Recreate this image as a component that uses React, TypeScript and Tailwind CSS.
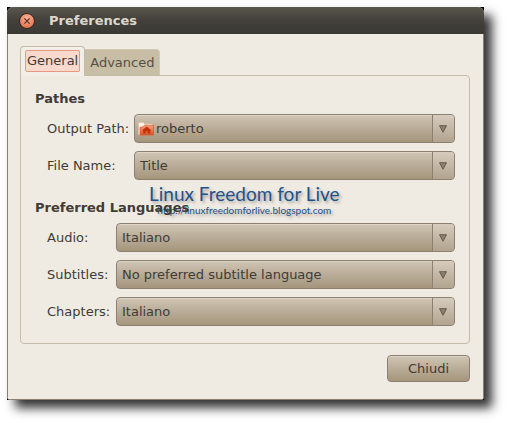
import type { ReactNode } from 'react';

type ComboProps = {
  id: string;
  label: string;
  value: string;
  options?: string[];
  labelWidth: string;
  icon?: ReactNode;
};

function HomeFolderIcon() {
  return (
    <svg viewBox="0 0 16 16" className="h-4 w-4" aria-hidden="true">
      <defs>
        <linearGradient id="folder" x1="0" y1="0" x2="0" y2="1">
          <stop offset="0" stopColor="#f3a37c" />
          <stop offset="1" stopColor="#dd5226" />
        </linearGradient>
      </defs>
      <path d="M0.5 13.5V1.5h5l1 1.5h8v10.5z" fill="#fbf1e6" stroke="#e3bda4" strokeWidth="0.6" />
      <path d="M2 14V6.2l3-.2 1.5-1.8H15.5V14z" fill="url(#folder)" stroke="#cf5a34" strokeWidth="0.7" />
      <path d="M8.7 5.5L4 9.5h1.2v3h2.5v-2.2h2v2.2h2.5v-3h1.300z" fill="#c0310c" />
    </svg>
  );
}

function ComboRow({ id, label, value, options = [], labelWidth, icon }: ComboProps) {
  return (
    <div className="flex items-center pl-3">
      <label htmlFor={id} className={`shrink-0 ${labelWidth}`}>
        {label}
      </label>
      <div className="relative min-w-0 flex-1">
        <select
          id={id}
          defaultValue={value}
          className={`block h-[29px] w-full appearance-none rounded-[4px] border border-[#8c8070] bg-linear-to-b from-[#d0c5b4] via-[#b9ac98] to-[#a5957c] pt-px pr-6 shadow-[inset_0_1px_0_#ddd4c6] ${icon ? 'pl-[21px]' : 'pl-[5px]'}`}
        >
          <option>{value}</option>
          {options.map((option) => (
            <option key={option}>{option}</option>
          ))}
        </select>
        {icon && <span className="pointer-events-none absolute top-[7px] left-1">{icon}</span>}
        <span className="pointer-events-none absolute inset-y-px right-px flex w-[22px] items-center justify-center rounded-r-[3px] border-l border-[#8c8070] bg-linear-to-b from-[#d6ccbe] to-[#b2a48e] pr-px">
          <svg viewBox="0 0 8 8" className="h-2 w-2" aria-hidden="true">
            <path d="M0.5 0.700h7L4 7.300z" fill="#8b7f6d" stroke="#5f564a" strokeWidth="0.9" />
          </svg>
        </span>
      </div>
    </div>
  );
}

function TitleBar() {
  return (
    <header className="flex h-[27px] items-center bg-linear-to-b from-[#5a574e] via-[#42403a] to-[#3b3934] pl-3">
      <button type="button" aria-label="Close" className="h-4 w-4">
        <svg viewBox="0 0 16 16" className="h-4 w-4" aria-hidden="true">
          <defs>
            <radialGradient id="close" cx="0.5" cy="0.3" r="0.7">
              <stop offset="0" stopColor="#f9b196" />
              <stop offset="1" stopColor="#e56f48" />
            </radialGradient>
          </defs>
          <circle cx="8" cy="8" r="7.500" fill="url(#close)" stroke="#2f2924" />
          <path d="M5.400 5.400l5.200 5.200M10.600 5.400l-5.200 5.200" stroke="#5c3527" strokeWidth="1.300" />
        </svg>
      </button>
      <h1 className="ml-[14px] pt-px font-bold text-[#dfd8c8]">Preferences</h1>
    </header>
  );
}

function Watermark() {
  return (
    <div className="pointer-events-none absolute -top-[14px] left-[114px] text-center font-[Lato,sans-serif] whitespace-nowrap text-[#1f5288] [text-shadow:2px_2px_3px_#a5a19a]">
      <div className="text-[19px] leading-5">Linux Freedom for Live</div>
      <div className="text-[10px] leading-3">http://linuxfreedomforlive.blogspot.com</div>
    </div>
  );
}

export default function App() {
  return (
    <main className="bg-white pt-[7px] pr-[23px] pb-[23px] pl-[7px] font-['DejaVu_Sans',sans-serif] text-[13px] leading-5 text-[#3f3b35]">
      <div className="bg-black shadow-[8px_8px_10px_#000000cc]">
        <div className="overflow-hidden rounded-t-[6px] rounded-b-[4px] bg-[#efebe3]">
          <TitleBar />
          <div className="border-x border-b border-[#8b806d] pt-3 pr-[13px] pb-[17px] pl-3">
            <div role="tablist" className="flex items-end">
              <button
                type="button"
                role="tab"
                aria-selected="true"
                className="relative z-10 -mb-px h-[30px] rounded-t-[4px] border border-b-0 border-[#c5bba9] bg-[#f3efe8] px-1 pb-px"
              >
                <span className="block rounded-[2px] border border-[#e8987f] bg-[#f8d9cd] px-px leading-5">General</span>
              </button>
              <button
                type="button"
                role="tab"
                aria-selected="false"
                className="h-[26px] rounded-tr-[4px] border border-b-0 border-l-0 border-[#d3c8b3] bg-[#c8bda5] px-[5px] text-[#555047]"
              >
                Advanced
              </button>
            </div>

            <section role="tabpanel" className="rounded-b-[4px] rounded-tr-[4px] border border-[#c5bba9] px-[14px] pt-[13px] pb-[17px]">
              <h2 className="font-bold">Pathes</h2>
              <div className="mt-[5px] flex flex-col gap-2">
                <ComboRow id="output-path" label="Output Path:" value="roberto" labelWidth="w-[87px]" icon={<HomeFolderIcon />} />
                <ComboRow id="file-name" label="File Name:" value="Title" labelWidth="w-[87px]" />
              </div>

              <div className="relative mt-[18px]">
                <Watermark />
                <h2 className="relative font-bold">Preferred Languages</h2>
              </div>
              <div className="mt-[5px] flex flex-col gap-2">
                <ComboRow id="audio" label="Audio:" value="Italiano" labelWidth="w-[69px]" />
                <ComboRow id="subtitles" label="Subtitles:" value="No preferred subtitle language" options={['Italiano']} labelWidth="w-[69px]" />
                <ComboRow id="chapters" label="Chapters:" value="Italiano" labelWidth="w-[69px]" />
              </div>
            </section>

            <div className="mt-[11px] flex justify-end">
              <button
                type="button"
                className="h-[27px] rounded-[4px] border border-[#8c8070] bg-linear-to-b from-[#d0c5b4] via-[#b9ac98] to-[#a5957c] px-5 shadow-[inset_0_1px_0_#ddd4c6]"
              >
                Chiudi
              </button>
            </div>
          </div>
        </div>
      </div>
    </main>
  );
}
